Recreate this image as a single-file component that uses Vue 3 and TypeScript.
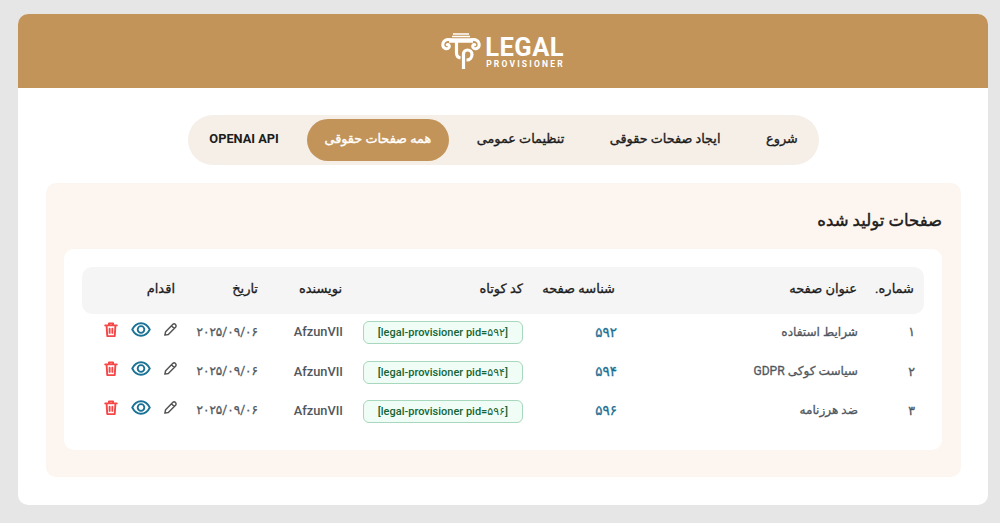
<script setup lang="ts">
interface Row { n: string; title: string; id: string; code: string; author: string; date: string }
interface Tab { label: string; latin?: boolean; on?: boolean }
const tabs: Tab[] = [
  { label: 'شروع' },
  { label: 'ایجاد صفحات حقوقی' },
  { label: 'تنظیمات عمومی' },
  { label: 'همه صفحات حقوقی', on: true },
  { label: 'OPENAI API', latin: true },
]
const rows: Row[] = [
  { n: '۱', title: 'شرایط استفاده', id: '۵۹۲', code: '[legal-provisioner pid=۵۹۲]', author: 'AfzunVII', date: '۲۰۲۵/۰۹/۰۶' },
  { n: '۲', title: 'سیاست کوکی GDPR', id: '۵۹۴', code: '[legal-provisioner pid=۵۹۴]', author: 'AfzunVII', date: '۲۰۲۵/۰۹/۰۶' },
  { n: '۳', title: 'ضد هرزنامه', id: '۵۹۶', code: '[legal-provisioner pid=۵۹۶]', author: 'AfzunVII', date: '۲۰۲۵/۰۹/۰۶' },
]
</script>

<template>
  <div class="page" dir="rtl">
    <div class="shell">
      <header class="top">
        <div class="logo" dir="ltr">
          <svg class="mark" width="40" height="38" viewBox="0 0 40 38" fill="none" stroke="#fff" stroke-linecap="round">
            <path d="M12 2h16M11 4.500h18" stroke-width="1.500" stroke-linecap="butt" />
            <path d="M8 8.500h24" stroke-width="4.500" stroke-linecap="butt" />
            <path d="M10 8C5 6.500 1.800 9 1.800 13c0 3.500 4.500 5 6.200 2.500 1-1.600-.2-3.200-1.800-2.800" stroke-width="3" />
            <path d="M30 8c5-1.500 8.200 1 8.200 5 0 3.500-4.500 5-6.200 2.500-1-1.600.2-3.200 1.800-2.800" stroke-width="3" />
            <path d="M15.500 10v11c0 3 1.500 4.500 4 5" stroke-width="3.200" stroke-linecap="butt" />
            <path d="M22.500 37V22c0-2.500 1.800-4 4-4s4.500 1.700 4.500 4.500-2 5.500-5.500 5.500" stroke-width="3.200" stroke-linecap="butt" />
          </svg>
          <div class="word">
            <span class="legal">LEGAL</span>
            <span class="prov">PROVISIONER</span>
          </div>
        </div>
      </header>

      <main class="body">
        <nav class="tabs-wrap">
          <div class="tabs">
            <span v-for="t in tabs" :key="t.label" class="tab" :class="{ on: t.on, latin: t.latin }">{{ t.label }}</span>
          </div>
        </nav>

        <section class="panel">
          <h2 class="heading">صفحات تولید شده</h2>
          <div class="inner">
            <table class="grid">
              <colgroup>
                <col class="c1" /><col class="c2" /><col class="c3" /><col class="c4" /><col class="c5" /><col class="c6" /><col class="c7" />
              </colgroup>
              <thead>
                <tr>
                  <th>شماره.</th><th>عنوان صفحه</th><th>شناسه صفحه</th><th>کد کوتاه</th><th>نویسنده</th><th>تاریخ</th><th>اقدام</th>
                </tr>
              </thead>
              <tbody>
                <tr v-for="r in rows" :key="r.id">
                  <td class="num">{{ r.n }}</td>
                  <td class="title">{{ r.title }}</td>
                  <td class="pid">{{ r.id }}</td>
                  <td class="cell-code"><code class="code" dir="ltr">{{ r.code }}</code></td>
                  <td class="author">{{ r.author }}</td>
                  <td class="date">{{ r.date }}</td>
                  <td class="cell-acts">
                    <div class="acts">
                      <svg width="15" height="15" viewBox="0 0 24 24" fill="none" stroke="#555" stroke-width="2.400" stroke-linejoin="round" stroke-linecap="round">
                        <path d="M3 21l1.200-5.500L15.500 4c1.200-1.200 3.300-1.200 4.500 0s1.200 3.300 0 4.500L8.500 20 3 21zM13.500 6l4.500 4.500" />
                      </svg>
                      <svg class="eye" width="20" height="15" viewBox="0 0 24 18" fill="none" stroke="#1a7396" stroke-width="2.200">
                        <path d="M1.500 9C4 4 8 1.500 12 1.500S20 4 22.500 9C20 14 16 16.500 12 16.500S4 14 1.500 9z" />
                        <circle cx="12" cy="9" r="4" />
                      </svg>
                      <svg width="14" height="15" viewBox="0 0 20 22" fill="none" stroke="#f44747" stroke-width="2.800" stroke-linejoin="round" stroke-linecap="round">
                        <path d="M1.500 5h17M7 5V2h6v3M3.500 5l1 15c0 .6.500 1 1 1h9c.5 0 1-.4 1-1l1-15M8 10v6M12 10v6" />
                      </svg>
                    </div>
                  </td>
                </tr>
              </tbody>
            </table>
          </div>
        </section>
      </main>
    </div>
  </div>
</template>

<style>
html, body { margin: 0; background: #e6e6e6; }
</style>

<style scoped>
.page {
  box-sizing: border-box;
  height: 523px;
  padding: 14px 12px 18px 18px;
  background: #e6e6e6;
  font-family: Roboto, "Noto Sans", "DejaVu Sans", sans-serif;
  color: #222;
  overflow: hidden;
}
.shell {
  background: #fff;
  border-radius: 10px;
  height: 491px;
  overflow: hidden;
}
.top {
  box-sizing: border-box;
  height: 74px;
  background: #c29459;
  display: flex;
  align-items: center;
  justify-content: center;
}
.logo { display: flex; align-items: center; gap: 4px; color: #fff; }
.word { display: flex; flex-direction: column; align-items: flex-start; padding-top: 3px; }
.legal { font: 700 25.500px/20px Roboto, sans-serif; letter-spacing: 0.5px; }
.prov { font: 700 8.500px/8px Roboto, sans-serif; letter-spacing: 2.200px; margin: 3px 0 0 1px; }
.body { padding: 27px 27px 0 28px; }
.tabs-wrap { display: flex; justify-content: center; margin-bottom: 18px; }
.tabs {
  display: flex;
  gap: 10px;
  padding: 4px;
  background: #f5efe8;
  border-radius: 25px;
}
.tab {
  padding: 0 17.800px;
  height: 42px;
  line-height: 40px;
  font-size: 12.800px;
  font-weight: 400;
  -webkit-text-stroke: 0.35px currentColor;
  color: #1c1c1c;
  border-radius: 21px;
  white-space: nowrap;
}
.tab.latin { font-weight: 700; -webkit-text-stroke: 0; }
.tab.on { background: #c29459; color: #fff; }
.panel {
  background: #fdf6f0;
  border-radius: 10px;
  padding: 18px 19px 27px 18px;
  height: 294px;
  box-sizing: border-box;
}
.heading {
  margin: 4px 0 12px;
  font-size: 16.500px;
  font-weight: 400;
  -webkit-text-stroke: 0.45px currentColor;
  line-height: 32px;
  color: #1c1c1c;
}
.inner {
  background: #fff;
  border-radius: 10px;
  padding: 18px;
}
.grid {
  width: 842px;
  border-collapse: separate;
  border-spacing: 0;
  table-layout: fixed;
  font-size: 12px;
}
.c1 { width: 57px; }
.c2 { width: 242px; }
.c3 { width: 92px; }
.c4 { width: 181px; }
.c5 { width: 84px; }
.c6 { width: 83px; }
.c7 { width: 103px; }
th {
  box-sizing: border-box;
  height: 47px;
  padding: 0 10px 4px;
  background: #f5f5f5;
  text-align: right;
  font-weight: 400;
  -webkit-text-stroke: 0.3px currentColor;
  color: #1c1c1c;
  font-size: 13px;
  white-space: nowrap;
}
th:first-child { border-radius: 0 10px 10px 0; }
th:last-child { border-radius: 10px 0 0 10px; }
td {
  height: 39.400px;
  padding: 0 10px 4px;
  color: #50575e;
  font-weight: 400;
  -webkit-text-stroke: 0.3px currentColor;
  white-space: nowrap;
  box-sizing: border-box;
}
.num { font-size: 12.500px; padding-right: 9px; }
.title { font-size: 12.100px; padding-right: 9px; }
.date { font-size: 12px; }
.author { font-size: 12.800px; font-weight: 500; -webkit-text-stroke: 0; padding-right: 9px; }
.pid { color: #1a6f93; font-size: 13.500px; padding-right: 8px; }
.cell-code { -webkit-text-stroke: 0; padding-bottom: 2px; }
.cell-acts { -webkit-text-stroke: 0; }
.code {
  display: inline-block;
  height: 23px;
  box-sizing: border-box;
  padding: 0 14px;
  border: 1px solid #a7d7bd;
  border-radius: 6px;
  background: #f0fdf6;
  color: #166534;
  font: 500 11px/21px Roboto, "DejaVu Sans", sans-serif;
}
.acts {
  display: flex;
  align-items: center;
  gap: 12px;
  margin: -5px -3px 0 0;
}
.eye { margin-left: 1px; }
</style>
